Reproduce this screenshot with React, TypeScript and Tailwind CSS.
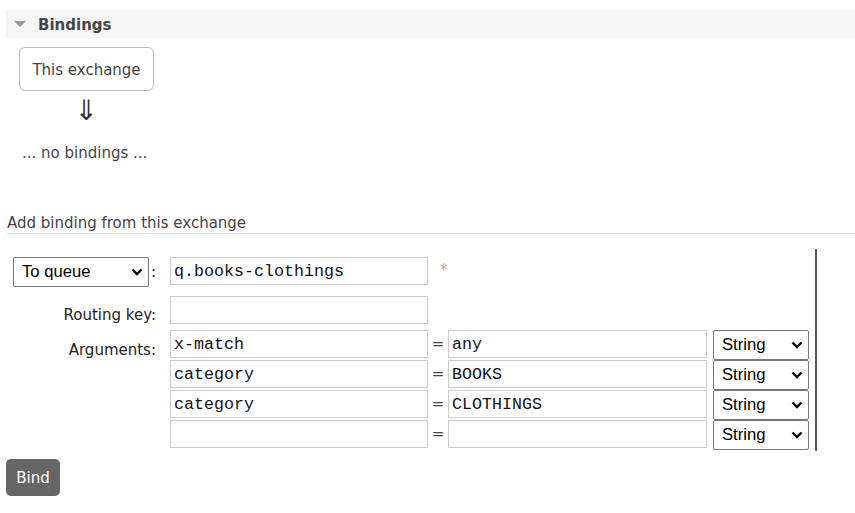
import React from "react";

function Chevron() {
  return (
    <svg
      className="pointer-events-none absolute right-[6px] top-1/2 -translate-y-1/2"
      width="12"
      height="8"
      viewBox="0 0 12 8"
    >
      <path d="M1.5 1.5 L6 6 L10.5 1.5" fill="none" stroke="#000" strokeWidth="2.4" />
    </svg>
  );
}

function FakeSelect({ value, w }: { value: string; w: string }) {
  return (
    <div className={`relative ${w} h-[30px] shrink-0`}>
      <select
        defaultValue={value}
        className="w-full h-full appearance-none bg-white border border-[#767676] rounded-[2px] pl-[8px] text-[16.67px] text-black font-['Liberation_Sans',Arial,sans-serif] outline-none"
      >
        <option>{value}</option>
      </select>
      <Chevron />
    </div>
  );
}

function TextInput({ value, w = "w-[258px]" }: { value: string; w?: string }) {
  return (
    <input
      readOnly
      value={value}
      className={`${w} h-[28px] shrink-0 border border-[#cccccc] bg-white px-[3px] text-[16.67px] text-[#111] font-['Liberation_Mono','Courier_New',monospace] outline-none`}
    />
  );
}

export default function App() {
  const args = [
    ["x-match", "any"],
    ["category", "BOOKS"],
    ["category", "CLOTHINGS"],
    ["", ""],
  ];
  return (
    <div className="w-[855px] h-[513px] overflow-hidden bg-white text-[15px] leading-[18px] text-[#444] font-['DejaVu_Sans',Verdana,sans-serif]">
      <div className="pt-[10px]">
        <div className="ml-[6px] h-[28px] bg-[#f5f5f5] flex items-center">
          <svg className="ml-[8px]" width="12" height="7" viewBox="0 0 12 7">
            <polygon points="0,0 12,0 6,6" fill="#9a9a9a" />
          </svg>
          <span className="ml-[12px] mt-[2px] font-bold text-[#444]">Bindings</span>
        </div>

        <div className="mt-[9px] ml-[19px] w-[135px] h-[44px] pt-[2px] border border-[#bbbbbb] rounded-[6px] flex items-center justify-center text-[#444]">
          This exchange
        </div>
        <div className="ml-[19px] w-[135px] h-[36px] pt-[4px] flex items-center justify-center text-[28px] leading-[28px] text-[#333]">
          ⇓
        </div>
        <div className="mt-[17px] ml-[22px] text-[#444]">... no bindings ...</div>

        <div className="mt-[52px] ml-[7px] pb-[1px] border-b border-[#dddddd] text-[#444]">
          Add binding from this exchange
        </div>

        <div className="mt-[15px] w-[817px] border-r-2 border-[#555] pt-[8px] pb-[1px]">
          {/* Row 1 */}
          <div className="flex items-start">
            <div className="w-[156px] shrink-0 flex items-center h-[30px]">
              <div className="ml-[13px]">
                <FakeSelect value="To queue" w="w-[136px]" />
              </div>
              <span className="flex-1 text-right text-[#222]">:</span>
            </div>
            <div className="ml-[14px] flex items-start">
              <TextInput value="q.books-clothings" />
              <span className="ml-[12px] mt-[4px] text-[#ff8c8c]">*</span>
            </div>
          </div>

          {/* Row 2 */}
          <div className="mt-[9px] flex items-start">
            <div className="w-[156px] shrink-0 pt-[10px] text-right text-[#222]">Routing key:</div>
            <div className="ml-[14px]">
              <TextInput value="" />
            </div>
          </div>

          {/* Arguments */}
          <div className="mt-[6px] flex items-start">
            <div className="w-[156px] shrink-0 pt-[11px] text-right text-[#222]">Arguments:</div>
            <div className="ml-[14px] flex flex-col">
              {args.map(([k, v], i) => (
                <div key={i} className="h-[30px] flex items-start">
                  <TextInput value={k} />
                  <span className="w-[20px] h-[28px] flex items-center justify-center text-[#444]">=</span>
                  <TextInput value={v} w="w-[259px]" />
                  <div className="ml-[6px]">
                    <FakeSelect value="String" w="w-[96px]" />
                  </div>
                </div>
              ))}
            </div>
          </div>
        </div>

        <button className="mt-[8px] ml-[6px] w-[54px] h-[37px] bg-[#666666] text-white rounded-[5px] text-[15px] font-['DejaVu_Sans',Verdana,sans-serif]">
          Bind
        </button>
      </div>
    </div>
  );
}
